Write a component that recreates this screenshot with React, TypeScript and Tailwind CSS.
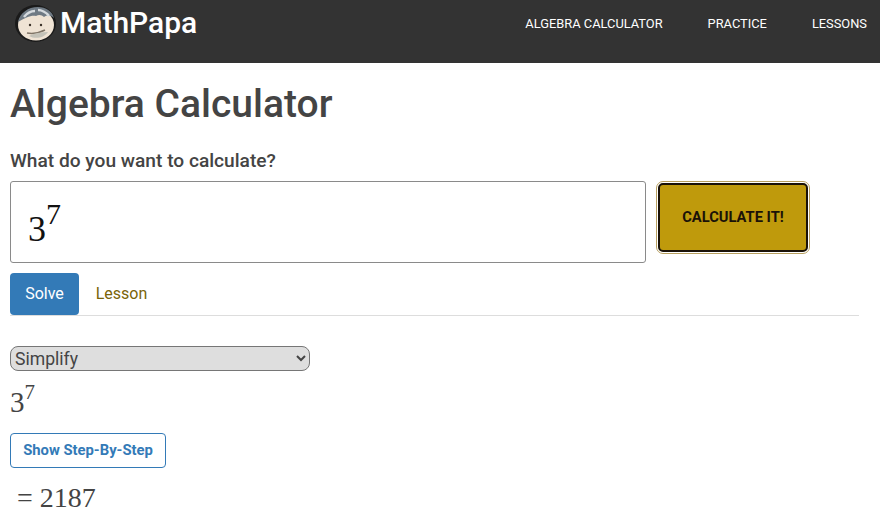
export default function App() {
  const serif = { fontFamily: '"Liberation Serif", serif' };
  return (
    <div className="h-[530px] w-[880px] overflow-hidden bg-white font-['Roboto',sans-serif] text-[#444444]">
      <header className="flex h-[63px] items-start justify-between bg-[#333333]">
        <div className="flex items-center pl-[15px] pt-[3px]">
          <svg width="41" height="37" viewBox="0 0 41 37" className="shrink-0">
            <ellipse cx="20.5" cy="18.5" rx="20.5" ry="18.5" fill="#1a1a1a" />
            <ellipse cx="21" cy="20" rx="18" ry="15.5" fill="#efe3d4" />
            <path d="M3 17C5 8 13 2 23 2c8 0 14 4 16 11-4-3-7-3-10-1-2-2-5-3-8-1-5-1-11 2-18 6Z" fill="#6f7a84" />
            <path d="M9 12c3-4 7-6 11-6M23 5c3 0 8 2 11 6" stroke="#d5dade" strokeWidth="2.5" fill="none" />
            <circle cx="15" cy="20" r="1.2" fill="#3a3027" />
            <circle cx="26" cy="20" r="1.2" fill="#3a3027" />
            <path d="M12 28c5 1 12 0 18-3" stroke="#7f7466" strokeWidth="1.5" fill="none" />
            <path d="M14 31c5-3 12-4 19-4-3 5-12 8-19 4Z" fill="#c4c2b8" />
          </svg>
          <span className="ml-[4px] text-[30px] leading-[40px] font-medium text-white">MathPapa</span>
        </div>
        <nav className="flex pt-[15px] pr-[13px] text-[12.85px] leading-[18px] text-white">
          <span>ALGEBRA CALCULATOR</span>
          <span className="ml-[45px]">PRACTICE</span>
          <span className="ml-[45px]">LESSONS</span>
        </nav>
      </header>

      <main className="pl-[10px] pr-[21px]">
        <h1 className="pt-[18px] text-[39px] leading-[46px] font-medium">Algebra Calculator</h1>
        <p className="mt-[21px] text-[19.15px] leading-[26px] font-medium">What do you want to calculate?</p>

        <div className="mt-[7px] flex items-start gap-[10px]">
          <div className="flex h-[82px] w-[636px] items-center rounded-[3px] border border-[#8a8a8a] pl-[17px] text-[#111]" style={serif}>
            <span className="mt-[13px] text-[36px] leading-none">3<sup className="top-[-17px] align-baseline text-[30px] leading-none">7</sup></span>
          </div>
          <button className="m-[2px] flex h-[69px] w-[150px] items-center justify-center rounded-[5px] border-2 border-[#1a1208] bg-[#bf9a0c] text-[14.7px] font-bold text-[#1a1208] outline outline-1 outline-offset-1 outline-[#b8a060]">
            CALCULATE IT!
          </button>
        </div>

        <div className="mt-[10px] flex h-[43px] items-start gap-[2px] border-b border-[#dddddd] text-[16px]">
          <span className="flex h-[42px] w-[69px] items-center justify-center rounded-[4px] bg-[#337ab7] text-white">Solve</span>
          <span className="flex h-[42px] w-[81px] items-center justify-center text-[#7a6408]">Lesson</span>
        </div>

        <select className="mt-[30px] block h-[25px] w-[300px] rounded-[8px] border border-[#767676] bg-[#dedede] text-[17.6px] leading-[22px] text-[#444444]">
          <option>Simplify</option>
        </select>

        <div className="mt-[13px] h-[36px] text-[29px] leading-[36px]" style={serif}>
          3<sup className="top-[-13px] align-baseline text-[21px] leading-none">7</sup>
        </div>

        <button className="mt-[13px] flex h-[35px] w-[156px] items-center justify-center rounded-[4px] border border-[#337ab7] text-[14.8px] font-bold text-[#337ab7]">
          Show Step-By-Step
        </button>

        <div className="mt-[13px] pl-[7px] text-[28px] leading-[34px]" style={serif}>= 2187</div>
      </main>
    </div>
  );
}
